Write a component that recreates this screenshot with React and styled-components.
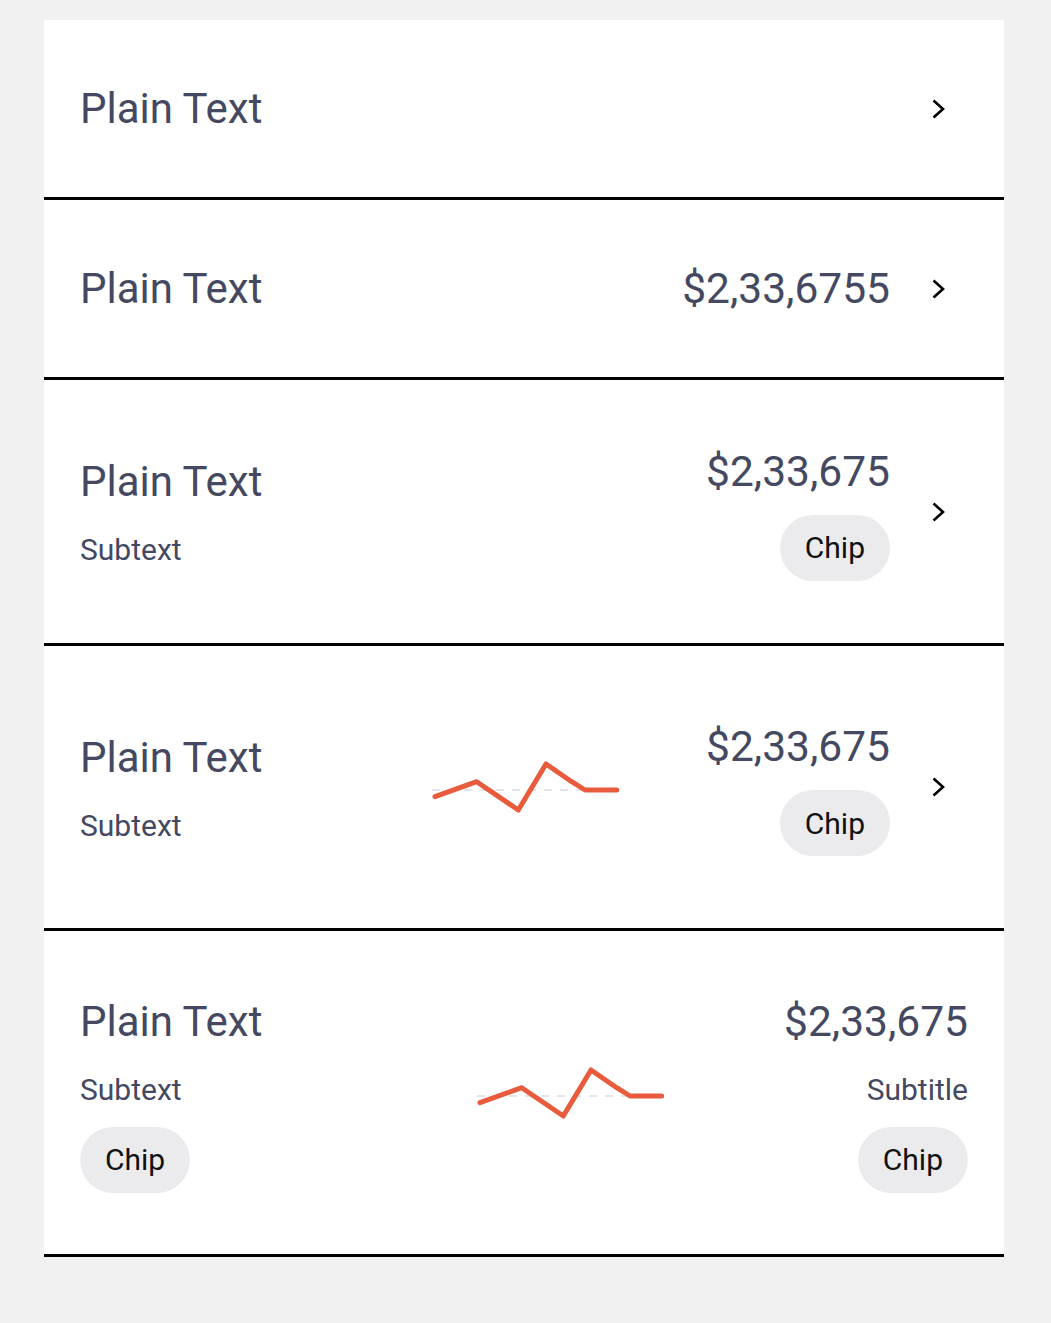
import React from "react"
import styled, { createGlobalStyle } from "styled-components"

const GlobalStyle = createGlobalStyle`
  body {
    margin: 0;
    background: #f1f1f1;
    font-family: Roboto, "Liberation Sans", sans-serif;
  }
`

const Page = styled.div`
  padding: 20px 47px 60px 44px;
`

const Card = styled.section`
  background: #ffffff;
  display: flex;
  flex-direction: column;
`

const Row = styled.div`
  display: flex;
  align-items: center;
  padding: ${p => p.$pad || 60}px 36px;
  border-bottom: 3px solid #000;
`

const Left = styled.div`
  flex: 1;
  display: flex;
  flex-direction: column;
  align-items: flex-start;
`

const Right = styled.div`
  display: flex;
  flex-direction: column;
  align-items: flex-end;
`

const Title = styled.div`
  font-size: 42px;
  line-height: 57px;
  color: #444961;
`

const Amount = styled(Title)`
  font-size: 42.5px;
`

const Sub = styled.div`
  font-size: 30px;
  line-height: 40px;
  margin-top: 20px;
  color: #444961;
`

const Chip = styled.span`
  display: inline-flex;
  align-items: center;
  height: 66px;
  padding: 0 25px;
  margin-top: ${p => p.$top}px;
  border-radius: 33px;
  background: #ebebed;
  color: #111111;
  font-size: 30px;
`

const Chevron = styled.svg`
  flex: none;
  margin-left: 42px;
  margin-right: 23px;
`

const Spark = styled.svg`
  flex: none;
  margin-right: ${p => p.$gap}px;
  overflow: visible;
`

const ChevronIcon = () => (
  <Chevron width="13" height="20" viewBox="0 0 13 20">
    <path d="M1.5 1.5 L11 10 L1.5 18.5" fill="none" stroke="#000" strokeWidth="2.6" />
  </Chevron>
)

const Sparkline = ({ gap }) => (
  <Spark $gap={gap} width="190" height="60" viewBox="0 0 190 60">
    <line x1="0" y1="33" x2="190" y2="33" stroke="#e4e4ea" strokeWidth="2" strokeDasharray="8 8" />
    <polyline
      points="3,39.7 44.7,24.7 86.3,53 114,7 139.7,24.7 153,33 184.7,33"
      fill="none"
      stroke="#e85b3c"
      strokeWidth="5"
      strokeLinejoin="round"
      strokeLinecap="round"
    />
  </Spark>
)

const App = () => {
  return (
    <Page>
      <GlobalStyle />
      <Card>
        <Row>
          <Left>
            <Title>Plain Text</Title>
          </Left>
          <ChevronIcon />
        </Row>

        <Row>
          <Left>
            <Title>Plain Text</Title>
          </Left>
          <Right>
            <Amount>$2,33,6755</Amount>
          </Right>
          <ChevronIcon />
        </Row>

        <Row $pad={62.5}>
          <Left>
            <Title>Plain Text</Title>
            <Sub>Subtext</Sub>
          </Left>
          <Right>
            <Amount>$2,33,675</Amount>
            <Chip $top={15}>Chip</Chip>
          </Right>
          <ChevronIcon />
        </Row>

        <Row $pad={72}>
          <Left>
            <Title>Plain Text</Title>
            <Sub>Subtext</Sub>
          </Left>
          <Sparkline gap={84} />
          <Right>
            <Amount>$2,33,675</Amount>
            <Chip $top={15}>Chip</Chip>
          </Right>
          <ChevronIcon />
        </Row>

        <Row $pad={61.5}>
          <Left>
            <Title>Plain Text</Title>
            <Sub>Subtext</Sub>
            <Chip $top={17}>Chip</Chip>
          </Left>
          <Sparkline gap={117} />
          <Right>
            <Amount>$2,33,675</Amount>
            <Sub>Subtitle</Sub>
            <Chip $top={17}>Chip</Chip>
          </Right>
        </Row>
      </Card>
    </Page>
  )
}

export default App
